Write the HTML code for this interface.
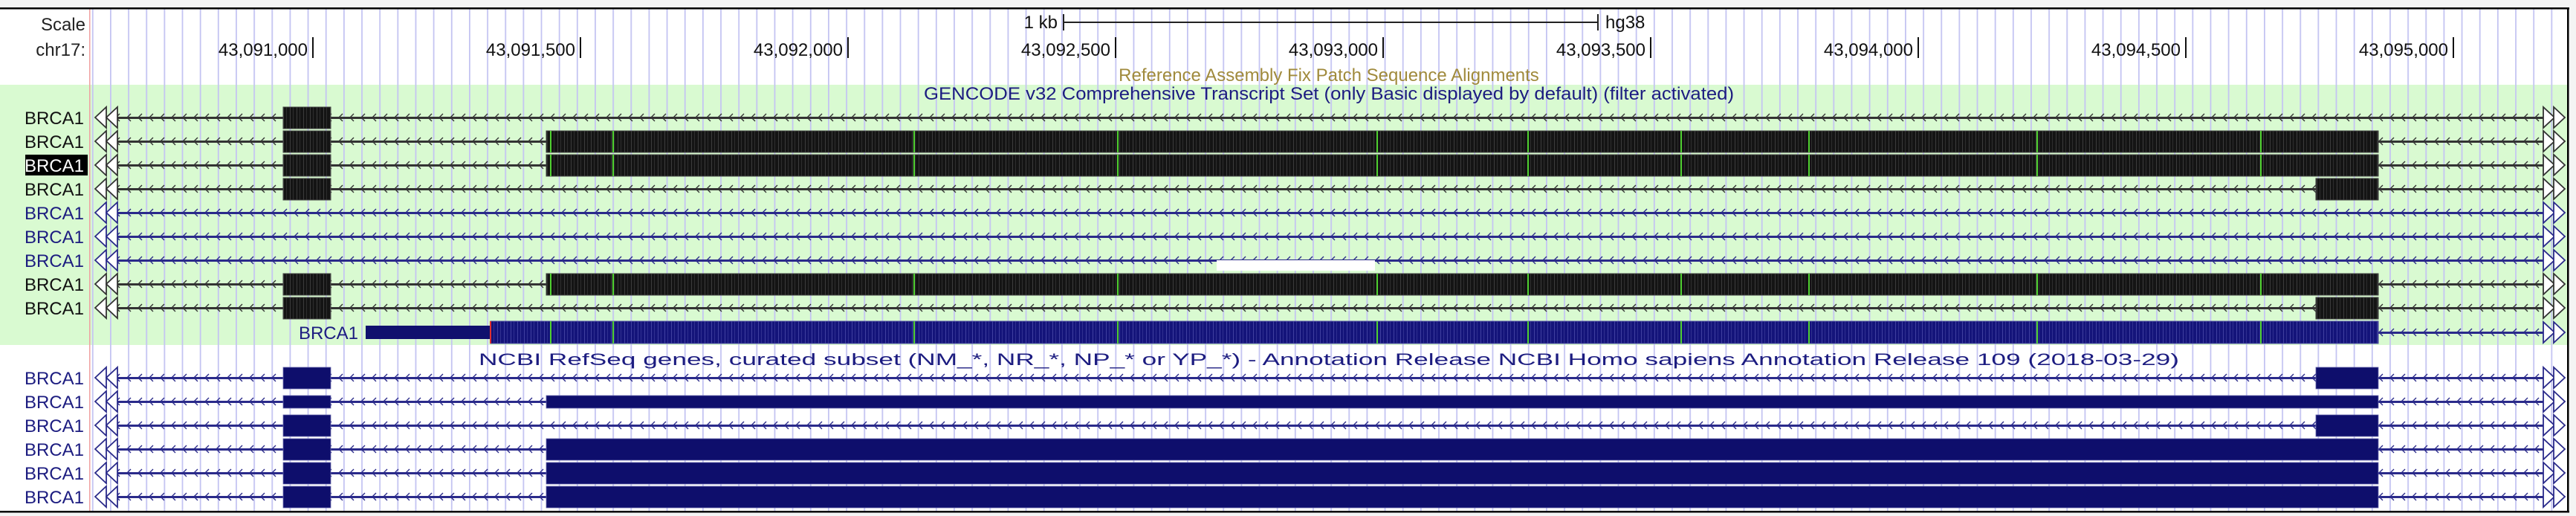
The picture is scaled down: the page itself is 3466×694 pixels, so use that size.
<!DOCTYPE html>
<html><head><meta charset="utf-8"><style>
html,body{margin:0;padding:0;background:#f4f4f4;}
svg{display:block;}
text{font-family:"Liberation Sans",sans-serif;font-size:24px;}
</style></head><body>
<svg width="3466" height="694" viewBox="0 0 3466 694" xmlns="http://www.w3.org/2000/svg">
<defs>
  <pattern id="grid" patternUnits="userSpaceOnUse" x="148" y="0" width="24.15" height="10">
    <rect x="0" y="0" width="1.8" height="10" fill="#c4c4f2"/>
  </pattern>
  <pattern id="chK" patternUnits="userSpaceOnUse" x="0" y="14" width="15" height="32">
    <path d="M11,11 L6,16 L11,21" fill="none" stroke="#333" stroke-width="1.4"/>
  </pattern>
  <pattern id="chB" patternUnits="userSpaceOnUse" x="0" y="14" width="15" height="32">
    <path d="M11,11 L6,16 L11,21" fill="none" stroke="#2a2a8a" stroke-width="1.4"/>
  </pattern>
  <pattern id="chN" patternUnits="userSpaceOnUse" x="0" y="12" width="15" height="32">
    <path d="M11,11 L6,16 L11,21" fill="none" stroke="#2a2a8a" stroke-width="1.4"/>
  </pattern>
  <pattern id="chR" patternUnits="userSpaceOnUse" x="0" y="15" width="15" height="32">
    <path d="M11,11 L6,16 L11,21" fill="none" stroke="#2a2a8a" stroke-width="1.4"/>
  </pattern>
  <pattern id="exK" patternUnits="userSpaceOnUse" x="0" y="0" width="9" height="10">
    <rect width="9" height="10" fill="#141414"/>
    <rect x="3" width="1" height="10" fill="#3c3c3c"/>
    <rect x="7" width="1" height="10" fill="#2e2e2e"/>
  </pattern>
  <pattern id="exB" patternUnits="userSpaceOnUse" x="0" y="0" width="9" height="10">
    <rect width="9" height="10" fill="#14147a"/>
    <rect x="3" width="1" height="10" fill="#4040a0"/>
    <rect x="7" width="1" height="10" fill="#303090"/>
  </pattern>
  <g id="arL" fill="#fff" stroke="#333" stroke-width="1.8">
    <path d="M128,0 L143,-14 L143,14 Z"/><path d="M143,0 L158,-14 L158,14 Z"/>
  </g>
  <g id="arLB" fill="#fff" stroke="#2a2a8a" stroke-width="1.8">
    <path d="M128,0 L143,-14 L143,14 Z"/><path d="M143,0 L158,-14 L158,14 Z"/>
  </g>
  <g id="arR" fill="#fff" stroke="#333" stroke-width="1.8">
    <path d="M3437,0 L3422,-14 L3422,14 Z"/><path d="M3451,0 L3436,-14 L3436,14 Z"/>
  </g>
  <g id="arRB" fill="#fff" stroke="#2a2a8a" stroke-width="1.8">
    <path d="M3437,0 L3422,-14 L3422,14 Z"/><path d="M3451,0 L3436,-14 L3436,14 Z"/>
  </g>
</defs>

<rect x="0" y="0" width="3466" height="694" fill="#f4f4f4"/>
<rect x="0" y="11" width="3456" height="677" fill="#fff"/>
<rect x="0" y="114" width="3455" height="350" fill="#d9fad1"/>
<rect x="121" y="12" width="3334" height="676" fill="url(#grid)"/>
<rect x="120" y="12" width="1.5" height="676" fill="#f0a0a0"/>
<rect x="0" y="10" width="3457" height="2.5" fill="#000"/>
<rect x="0" y="687" width="3457" height="2.5" fill="#000"/>
<rect x="3454" y="10" width="2.5" height="679" fill="#000"/>

<text x="115" y="41" text-anchor="end" fill="#222">Scale</text>
<text x="115" y="75" text-anchor="end" fill="#222">chr17:</text>
<text x="1423" y="38" text-anchor="end" fill="#111">1 kb</text>
<rect x="1431" y="29" width="719" height="2" fill="#222"/>
<rect x="1430" y="19" width="2" height="22" fill="#222"/>
<rect x="2149" y="19" width="2" height="22" fill="#222"/>
<text x="2160" y="38" fill="#111">hg38</text>
<g fill="#111">
<text x="414" y="75" text-anchor="end">43,091,000</text><rect x="420" y="50" width="2" height="28"/>
<text x="774" y="75" text-anchor="end">43,091,500</text><rect x="780" y="50" width="2" height="28"/>
<text x="1134" y="75" text-anchor="end">43,092,000</text><rect x="1140" y="50" width="2" height="28"/>
<text x="1494" y="75" text-anchor="end">43,092,500</text><rect x="1500" y="50" width="2" height="28"/>
<text x="1854" y="75" text-anchor="end">43,093,000</text><rect x="1860" y="50" width="2" height="28"/>
<text x="2214" y="75" text-anchor="end">43,093,500</text><rect x="2220" y="50" width="2" height="28"/>
<text x="2574" y="75" text-anchor="end">43,094,000</text><rect x="2580" y="50" width="2" height="28"/>
<text x="2934" y="75" text-anchor="end">43,094,500</text><rect x="2940" y="50" width="2" height="28"/>
<text x="3294" y="75" text-anchor="end">43,095,000</text><rect x="3300" y="50" width="2" height="28"/>
</g>
<text x="1788" y="109" text-anchor="middle" fill="#a08a3c">Reference Assembly Fix Patch Sequence Alignments</text>
<text x="1788" y="134" text-anchor="middle" fill="#1c1c80" textLength="1090" lengthAdjust="spacingAndGlyphs">GENCODE v32 Comprehensive Transcript Set (only Basic displayed by default) (filter activated)</text>

<g>
<rect x="156" y="157" width="3268" height="3" fill="#333"/><rect x="156" y="152" width="3266" height="12" fill="url(#chK)"/>
<rect x="156" y="189" width="3268" height="3" fill="#333"/><rect x="156" y="184" width="3266" height="12" fill="url(#chK)"/>
<rect x="156" y="221" width="3268" height="3" fill="#333"/><rect x="156" y="216" width="3266" height="12" fill="url(#chK)"/>
<rect x="156" y="253" width="3268" height="3" fill="#333"/><rect x="156" y="248" width="3266" height="12" fill="url(#chK)"/>
<rect x="156" y="285" width="3268" height="3" fill="#2a2a8a"/><rect x="156" y="280" width="3266" height="12" fill="url(#chB)"/>
<rect x="156" y="317" width="3268" height="3" fill="#2a2a8a"/><rect x="156" y="312" width="3266" height="12" fill="url(#chB)"/>
<rect x="156" y="349" width="3268" height="3" fill="#2a2a8a"/><rect x="156" y="344" width="3266" height="12" fill="url(#chB)"/>
<rect x="156" y="381" width="3268" height="3" fill="#333"/><rect x="156" y="376" width="3266" height="12" fill="url(#chK)"/>
<rect x="156" y="413" width="3268" height="3" fill="#333"/><rect x="156" y="408" width="3266" height="12" fill="url(#chK)"/>
<rect x="1637" y="350" width="213" height="14" fill="#fff"/>
<use href="#arL" y="158"/><use href="#arR" y="158"/>
<use href="#arL" y="190"/><use href="#arR" y="190"/>
<use href="#arL" y="222"/><use href="#arR" y="222"/>
<use href="#arL" y="254"/><use href="#arR" y="254"/>
<use href="#arLB" y="286"/><use href="#arRB" y="286"/>
<use href="#arLB" y="318"/><use href="#arRB" y="318"/>
<use href="#arLB" y="350"/><use href="#arRB" y="350"/>
<use href="#arL" y="382"/><use href="#arR" y="382"/>
<use href="#arL" y="414"/><use href="#arR" y="414"/>
<g fill="url(#exK)" stroke="#444" stroke-width="1">
<rect x="381" y="144" width="64" height="29"/>
<rect x="381" y="176" width="64" height="29"/><rect x="735" y="176" width="2465" height="29"/>
<rect x="381" y="208" width="64" height="29"/><rect x="735" y="208" width="2465" height="29"/>
<rect x="381" y="240" width="64" height="29"/><rect x="3116" y="240" width="84" height="29"/>
<rect x="381" y="368" width="64" height="29"/><rect x="735" y="368" width="2465" height="29"/>
<rect x="381" y="400" width="64" height="29"/><rect x="3116" y="400" width="84" height="29"/>
</g>
<g fill="#4fd030">
<rect x="740" y="176" width="2" height="29"/><rect x="824" y="176" width="2" height="29"/><rect x="1229" y="176" width="2" height="29"/><rect x="1503" y="176" width="2" height="29"/><rect x="1852" y="176" width="2" height="29"/><rect x="2055" y="176" width="2" height="29"/><rect x="2261" y="176" width="2" height="29"/><rect x="2433" y="176" width="2" height="29"/><rect x="2740" y="176" width="2" height="29"/><rect x="3041" y="176" width="2" height="29"/>
<rect x="740" y="208" width="2" height="29"/><rect x="824" y="208" width="2" height="29"/><rect x="1229" y="208" width="2" height="29"/><rect x="1503" y="208" width="2" height="29"/><rect x="1852" y="208" width="2" height="29"/><rect x="2055" y="208" width="2" height="29"/><rect x="2261" y="208" width="2" height="29"/><rect x="2433" y="208" width="2" height="29"/><rect x="2740" y="208" width="2" height="29"/><rect x="3041" y="208" width="2" height="29"/>
<rect x="740" y="368" width="2" height="29"/><rect x="824" y="368" width="2" height="29"/><rect x="1229" y="368" width="2" height="29"/><rect x="1503" y="368" width="2" height="29"/><rect x="1852" y="368" width="2" height="29"/><rect x="2055" y="368" width="2" height="29"/><rect x="2261" y="368" width="2" height="29"/><rect x="2433" y="368" width="2" height="29"/><rect x="2740" y="368" width="2" height="29"/><rect x="3041" y="368" width="2" height="29"/>
</g>
<g text-anchor="end">
<text x="113" y="167" fill="#111">BRCA1</text>
<text x="113" y="199" fill="#111">BRCA1</text>
<rect x="34" y="208" width="84" height="28" fill="#000"/>
<text x="113" y="231" fill="#fff">BRCA1</text>
<text x="113" y="263" fill="#111">BRCA1</text>
<text x="113" y="295" fill="#1c1c80">BRCA1</text>
<text x="113" y="327" fill="#1c1c80">BRCA1</text>
<text x="113" y="359" fill="#1c1c80">BRCA1</text>
<text x="113" y="391" fill="#111">BRCA1</text>
<text x="113" y="423" fill="#111">BRCA1</text>
</g>
</g>

<rect x="3200" y="446" width="224" height="3" fill="#2a2a8a"/><rect x="3200" y="441" width="222" height="12" fill="url(#chR)"/>
<use href="#arRB" y="447"/>
<text x="482" y="456" text-anchor="end" fill="#1c1c80">BRCA1</text>
<rect x="492" y="438" width="168" height="18" fill="#10106e"/>
<rect x="660" y="432" width="2540" height="30" fill="url(#exB)" stroke="#5050a0" stroke-width="1"/>
<rect x="659" y="432" width="2" height="30" fill="#e03030"/>
<g fill="#4fd030">
<rect x="740" y="432" width="2" height="30"/><rect x="824" y="432" width="2" height="30"/><rect x="1229" y="432" width="2" height="30"/><rect x="1503" y="432" width="2" height="30"/><rect x="1852" y="432" width="2" height="30"/><rect x="2055" y="432" width="2" height="30"/><rect x="2261" y="432" width="2" height="30"/><rect x="2433" y="432" width="2" height="30"/><rect x="2740" y="432" width="2" height="30"/><rect x="3041" y="432" width="2" height="30"/>
</g>

<text x="1788" y="491" text-anchor="middle" fill="#1c1c80" style="font-size:22px" textLength="2288" lengthAdjust="spacingAndGlyphs">NCBI RefSeq genes, curated subset (NM_*, NR_*, NP_* or YP_*) - Annotation Release NCBI Homo sapiens Annotation Release 109 (2018-03-29)</text>
<g>
<rect x="156" y="507" width="3268" height="3" fill="#2a2a8a"/><rect x="156" y="502" width="3266" height="12" fill="url(#chN)"/>
<rect x="156" y="539" width="3268" height="3" fill="#2a2a8a"/><rect x="156" y="534" width="3266" height="12" fill="url(#chN)"/>
<rect x="156" y="571" width="3268" height="3" fill="#2a2a8a"/><rect x="156" y="566" width="3266" height="12" fill="url(#chN)"/>
<rect x="156" y="603" width="3268" height="3" fill="#2a2a8a"/><rect x="156" y="598" width="3266" height="12" fill="url(#chN)"/>
<rect x="156" y="635" width="3268" height="3" fill="#2a2a8a"/><rect x="156" y="630" width="3266" height="12" fill="url(#chN)"/>
<rect x="156" y="667" width="3268" height="3" fill="#2a2a8a"/><rect x="156" y="662" width="3266" height="12" fill="url(#chN)"/>
<use href="#arLB" y="508"/><use href="#arRB" y="508"/>
<use href="#arLB" y="540"/><use href="#arRB" y="540"/>
<use href="#arLB" y="572"/><use href="#arRB" y="572"/>
<use href="#arLB" y="604"/><use href="#arRB" y="604"/>
<use href="#arLB" y="636"/><use href="#arRB" y="636"/>
<use href="#arLB" y="668"/><use href="#arRB" y="668"/>
<g fill="#0e0e6c" stroke="#6a6ab0" stroke-width="0.8">
<rect x="381" y="494" width="64" height="29"/><rect x="3116" y="494" width="84" height="29"/>
<rect x="381" y="532" width="64" height="17"/><rect x="735" y="532" width="2465" height="17"/>
<rect x="381" y="558" width="64" height="29"/><rect x="3116" y="558" width="84" height="29"/>
<rect x="381" y="590" width="64" height="29"/><rect x="735" y="590" width="2465" height="29"/>
<rect x="381" y="622" width="64" height="29"/><rect x="735" y="622" width="2465" height="29"/>
<rect x="381" y="654" width="64" height="29"/><rect x="735" y="654" width="2465" height="29"/>
</g>
<g text-anchor="end" fill="#1c1c80">
<text x="113" y="517">BRCA1</text>
<text x="113" y="549">BRCA1</text>
<text x="113" y="581">BRCA1</text>
<text x="113" y="613">BRCA1</text>
<text x="113" y="645">BRCA1</text>
<text x="113" y="677">BRCA1</text>
</g>
</g>
</svg>
</body></html>
